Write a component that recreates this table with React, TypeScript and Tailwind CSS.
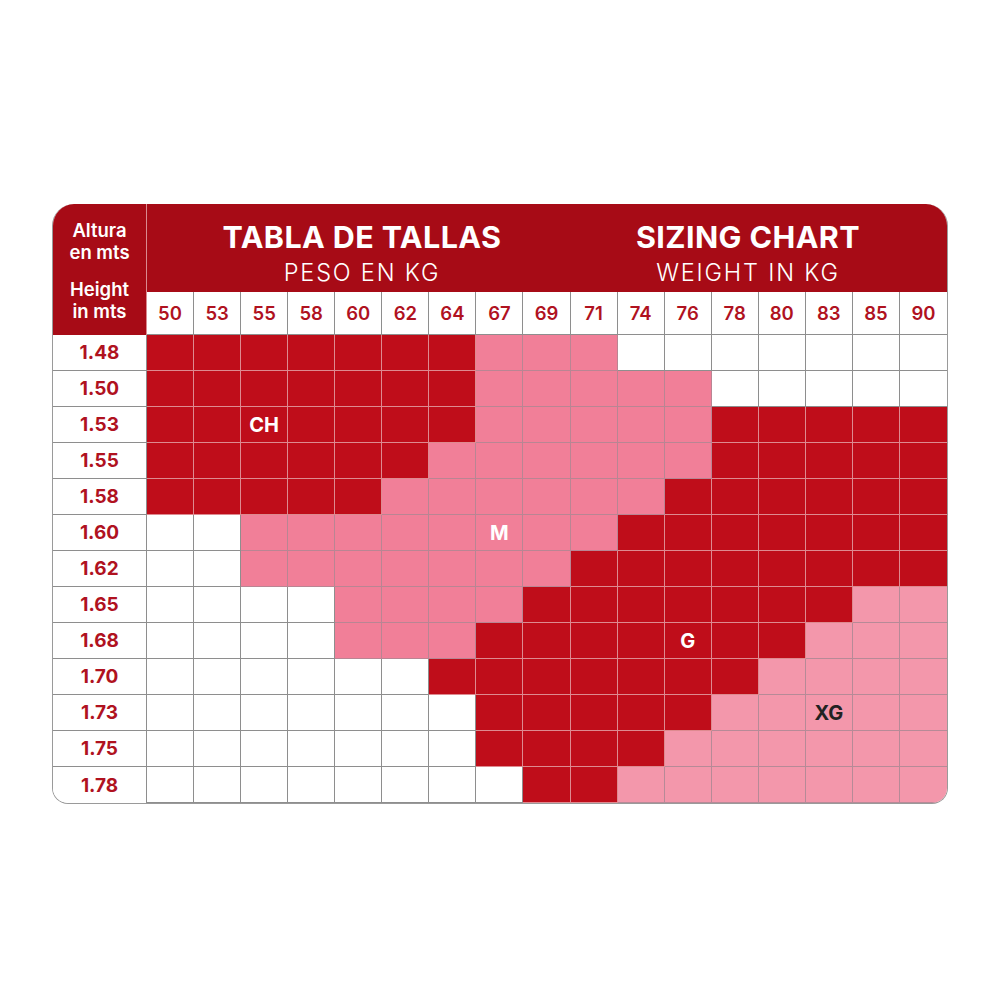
const weights = [50, 53, 55, 58, 60, 62, 64, 67, 69, 71, 74, 76, 78, 80, 83, 85, 90]

// R = CH/G red, P = M pink, X = XG pink, W = empty
const rows = [
  { h: '1.48', cells: 'RRRRRRRPPPWWWWWWW' },
  { h: '1.50', cells: 'RRRRRRRPPPPPWWWWW' },
  { h: '1.53', cells: 'RRRRRRRPPPPPRRRRR' },
  { h: '1.55', cells: 'RRRRRRPPPPPPRRRRR' },
  { h: '1.58', cells: 'RRRRRPPPPPPRRRRRR' },
  { h: '1.60', cells: 'WWPPPPPPPPRRRRRRR' },
  { h: '1.62', cells: 'WWPPPPPPPRRRRRRRR' },
  { h: '1.65', cells: 'WWWWPPPPRRRRRRRXX' },
  { h: '1.68', cells: 'WWWWPPPRRRRRRRXXX' },
  { h: '1.70', cells: 'WWWWWWRRRRRRRXXXX' },
  { h: '1.73', cells: 'WWWWWWWRRRRRXXXXX' },
  { h: '1.75', cells: 'WWWWWWWRRRRXXXXXX' },
  { h: '1.78', cells: 'WWWWWWWWRRXXXXXXX' },
]

const labels: Record<string, string> = {
  '2-2': 'CH',
  '5-7': 'M',
  '8-11': 'G',
  '10-14': 'XG',
}

const cellStyle = {
  R: 'bg-[#bf0d1a] border-[#de8a90] text-white',
  P: 'bg-[#f17f98] border-[#b98593] text-white',
  X: 'bg-[#f397ab] border-[#b68a97] text-[#222222]',
  W: 'bg-white border-[#8e8e8e]',
}

function Cell({ type, label, last }: { type: keyof typeof cellStyle, label?: string, last: boolean }) {
  return (
    <div
      className={`h-[36px] flex items-center justify-center border-b ${last ? '' : 'border-r'} ${cellStyle[type]} text-[20px] font-bold`}
    >
      {label}
    </div>
  )
}

export default function App() {
  return (
    <div
      className="w-[1000px] h-[1000px] bg-white pt-[204px] pl-[52px]"
      style={{ fontFamily: 'Inter, "Open Sans", sans-serif' }}
    >
      <div className="w-[896px] rounded-t-[22px] rounded-b-[16px] overflow-hidden border-x border-b border-[#9a9a9a]">
        {/* header */}
        <div className="flex">
          <div className="w-[94px] h-[131px] bg-[#a70b16] border-r border-[#d98a90] flex flex-col items-center justify-center gap-[15px] pt-[2px] text-white text-[18.5px] font-semibold leading-[22px] text-center">
            <div>Altura<br />en mts</div>
            <div>Height<br />in mts</div>
          </div>
          <div className="flex-1 flex flex-col">
            <div className="h-[88px] bg-[#a70b16] flex text-white">
              <div className="w-[430px] flex flex-col items-center pt-[15px]">
                <div className="text-[30.5px] font-bold leading-[36px] tracking-[0.4px]">TABLA DE TALLAS</div>
                <div className="mt-[3px] text-[23.5px] font-light leading-[30px] tracking-[1.8px]">PESO EN KG</div>
              </div>
              <div className="flex-1 flex flex-col items-center pt-[15px] pr-[28px]">
                <div className="text-[30.5px] font-bold leading-[36px] tracking-[0.4px]">SIZING CHART</div>
                <div className="mt-[3px] text-[23.5px] font-light leading-[30px] tracking-[1.8px]">WEIGHT IN KG</div>
              </div>
            </div>
            <div className="grid grid-cols-[repeat(17,1fr)] h-[43px] bg-white">
              {weights.map((w, i) => (
                <div
                  key={w}
                  className={`flex items-center justify-center pt-[2px] border-b border-[#8e8e8e] ${i < 16 ? 'border-r' : ''} text-[#b0121f] text-[18.5px] font-semibold`}
                >
                  {w}
                </div>
              ))}
            </div>
          </div>
        </div>

        {/* body */}
        {rows.map((row, r) => (
          <div key={row.h} className="grid grid-cols-[94px_repeat(17,1fr)]">
            <div
              className={`h-[36px] flex items-center justify-center pt-[2px] bg-white border-r border-[#8e8e8e] ${r < rows.length - 1 ? 'border-b' : ''} text-[#b0121f] text-[19px] font-bold`}
            >
              {row.h}
            </div>
            {row.cells.split('').map((c, i) => (
              <Cell
                key={i}
                type={c as keyof typeof cellStyle}
                label={labels[`${r}-${i}`]}
                last={i === 16}
              />
            ))}
          </div>
        ))}
      </div>
    </div>
  )
}
